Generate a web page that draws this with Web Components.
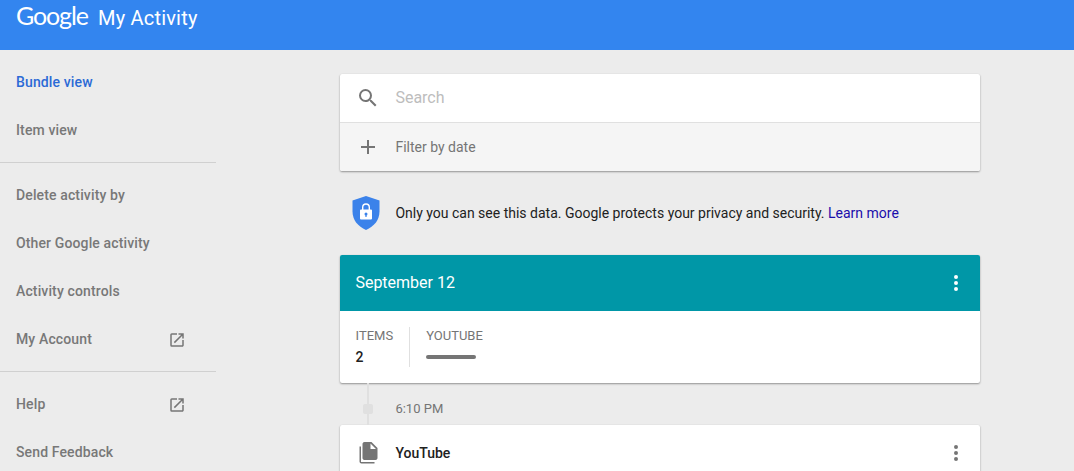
<!DOCTYPE html>
<html><head><meta charset="utf-8"><title>My Activity</title>
<style>
html,body{margin:0;height:471px;overflow:hidden;background:#ececec;font-family:Roboto,"Liberation Sans",sans-serif}
</style></head><body>
<ma-app></ma-app>
<script>
const ICONS={
search:'<path fill="#757575" d="M15.5 14h-.79l-.28-.27A6.47 6.47 0 0 0 16 9.5 6.5 6.5 0 1 0 9.5 16c1.61 0 3.09-.59 4.23-1.57l.27.28v.79l5 4.99L20.49 19l-4.99-5zm-6 0C7.01 14 5 11.99 5 9.5S7.01 5 9.5 5 14 7.01 14 9.5 11.99 14 9.5 14z"/>',
plus:'<path fill="#757575" d="M19 13h-6v6h-2v-6H5v-2h6V5h2v6h6v2z"/>',
open:'<path fill="#757575" d="M19 19H5V5h7V3H5a2 2 0 0 0-2 2v14a2 2 0 0 0 2 2h14c1.100 0 2-.9 2-2v-7h-2v7zM14 3v2h3.590l-9.830 9.830 1.410 1.410L19 6.410V10h2V3h-7z"/>',
more:'<path d="M12 8a2 2 0 1 0 0-4 2 2 0 0 0 0 4zm0 2a2 2 0 1 0 0 4 2 2 0 0 0 0-4zm0 6a2 2 0 1 0 0 4 2 2 0 0 0 0-4z"/>',
doc:'<path fill="#757575" d="M5 5.500H3.500v15c0 1.100.9 2 2 2h13V21H5z"/><path fill="#757575" d="M15.500 1h-7c-1.100 0-2 .9-2 2l-.01 14c0 1.100.89 2 1.990 2H19.500c1.100 0 2-.9 2-2V7zm-1 7V2.500L20 8z"/>'
};
class Base extends HTMLElement{
  render(css,html){this.attachShadow({mode:'open'}).innerHTML=`<style>${css}</style>${html}`}
}
class MaIcon extends HTMLElement{
  constructor(){super();const s=this.getAttribute('size')||24;
  this.attachShadow({mode:'open'}).innerHTML=`<style>:host{display:block;width:${s}px;height:${s}px;flex:none}svg{display:block}</style><svg width="${s}" height="${s}" viewBox="0 0 24 24" fill="currentColor">${ICONS[this.getAttribute('name')]}</svg>`}
}
customElements.define('ma-icon',MaIcon);
class MaHeader extends Base{constructor(){super();this.render(`
:host{display:flex;height:50px;background:#3385ef;color:#fff;align-items:flex-start;flex:none}
.g{font:400 25px/30px Lato,sans-serif;letter-spacing:-1.100px;margin:0 0 0 16px;width:82px;white-space:nowrap}
.t{font:400 20px/24px Roboto,sans-serif;letter-spacing:.2px;margin-top:6px}
`,`<span class="g">Google</span><span class="t">My Activity</span>`)}}
customElements.define('ma-header',MaHeader);
class MaNavItem extends Base{constructor(){super();const ext=this.hasAttribute('ext');this.render(`
:host{display:flex;height:48px;align-items:center;justify-content:space-between;padding:0 30px 0 16px;font:500 14px/20px Roboto,sans-serif;letter-spacing:.13px;color:#787878}
:host([active]){color:#2b6ad6}
ma-icon{margin-top:2px}
`,`<slot></slot>${ext?'<ma-icon name="open" size="18"></ma-icon>':''}`)}}
customElements.define('ma-nav-item',MaNavItem);
class MaNavGroup extends Base{constructor(){super();this.render(`
:host{display:block;padding:8px 0;border-bottom:1px solid #d0d0d0}
:host(:last-child){border-bottom:0}
`,`<slot></slot>`)}}
customElements.define('ma-nav-group',MaNavGroup);
class MaSidebar extends Base{constructor(){super();this.render(`:host{display:block;width:216px;flex:none}`,`<slot></slot>`)}}
customElements.define('ma-sidebar',MaSidebar);
class MaCard extends Base{constructor(){super();this.render(`
:host{display:block;background:#fff;border-radius:2px;box-shadow:0 1px 2px rgba(0,0,0,.38),0 0 1px rgba(0,0,0,.08);overflow:hidden;flex:none}
`,`<slot></slot>`)}}
customElements.define('ma-card',MaCard);
class MaRow extends Base{constructor(){super();this.render(`
:host{display:flex;height:48px;align-items:center;font:400 14px/20px Roboto,sans-serif}
.i{width:56px;display:flex;justify-content:center;flex:none}
.c{flex:1;min-width:0;margin-left:-.6px}
::slotted([slot=end]){margin-right:12px}
`,`<div class="i"><slot name="icon"></slot></div><div class="c"><slot></slot></div><slot name="end"></slot>`)}}
customElements.define('ma-row',MaRow);
class MaSearch extends Base{constructor(){super();this.render(`
:host{display:block;flex:none}
.f{background:#f5f5f5;border-top:1px solid #e0e0e0}
`,`<ma-card>
<ma-row><ma-icon slot="icon" name="search"></ma-icon><span style="font-size:16px;color:#bdbdbd">Search</span></ma-row>
<ma-row class="f"><ma-icon slot="icon" name="plus"></ma-icon><span style="color:#757575">Filter by date</span></ma-row>
</ma-card>`)}}
customElements.define('ma-search',MaSearch);
class MaNotice extends Base{constructor(){super();this.render(`
:host{display:flex;align-items:center;height:84px;flex:none;font:400 14px/20px Roboto,sans-serif;color:#212121}
.i{width:55.400px;flex:none;padding-left:12px;box-sizing:border-box}
svg{display:block}
a{color:#1a0dab;text-decoration:none}
`,`<div class="i"><svg width="28" height="34" viewBox="0 0 28 34"><path fill="#3b82ea" d="M14 0 .5 4.500v11C.5 24 6 30.500 14 34c8-3.500 13.500-10 13.500-18.500v-11z"/><path fill="#fff" d="M19 13.500h-1v-2.200a4 4 0 0 0-8 0v2.200H9a1 1 0 0 0-1 1v8a1 1 0 0 0 1 1h10a1 1 0 0 0 1-1v-8a1 1 0 0 0-1-1zm-7.600-2.200a2.600 2.600 0 0 1 5.200 0v2.200h-5.200z"/><circle cx="14" cy="18" r="1.500" fill="#3b82ea"/><rect x="13.400" y="18" width="1.200" height="3" fill="#3b82ea"/></svg></div>
<span>Only you can see this data. Google protects your privacy and security. <a href="#">Learn more</a></span>`)}}
customElements.define('ma-notice',MaNotice);
class MaDayCard extends Base{constructor(){super();this.render(`
:host{display:block;flex:none}
.h{height:56px;background:#0097a7;color:#fff;display:flex;align-items:center;justify-content:space-between;padding:0 12px 0 15.400px;font:400 16px/24px Roboto,sans-serif}
.b{height:72px;display:flex;padding:16px 0 0 15.600px;box-sizing:border-box;font:400 13px/18px Roboto,sans-serif;color:#757575}
.n{font-size:14px;line-height:24px;color:#212121;font-weight:500}
.st{padding-right:16px;height:40px;border-right:1px solid #e0e0e0;margin-right:16px}
.bar{width:50px;height:4px;border-radius:2px;background:#757575;margin-top:10px}
`,`<ma-card><div class="h"><span>September 12</span><ma-icon name="more"></ma-icon></div>
<div class="b"><div class="st">ITEMS<div class="n">2</div></div><div>YOUTUBE<div class="bar"></div></div></div></ma-card>`)}}
customElements.define('ma-day-card',MaDayCard);
class MaTimeline extends Base{constructor(){super();this.render(`
:host{display:block;height:42px;position:relative;font:400 13px/20px Roboto,sans-serif;color:#757575;padding:16px 0 0 55.400px;box-sizing:border-box;flex:none}
.l{position:absolute;left:27px;top:0;bottom:0;width:2px;background:#e0e0e0}
.d{position:absolute;left:23px;top:21px;width:10px;height:10px;border-radius:2px;background:#e0e0e0}
`,`<div class="l"></div><div class="d"></div><span>6:10 PM</span>`)}}
customElements.define('ma-timeline',MaTimeline);
class MaItem extends Base{constructor(){super();this.render(`:host{display:block;flex:none}
`,`<ma-card><ma-row style="height:56px"><ma-icon slot="icon" name="doc"></ma-icon><span style="font:500 14px/20px Roboto,sans-serif;color:#212121">YouTube</span><ma-icon slot="end" name="more" style="color:#757575"></ma-icon></ma-row></ma-card>`)}}
customElements.define('ma-item',MaItem);
class MaApp extends Base{constructor(){super();this.render(`
:host{display:flex;flex-direction:column;height:471px;overflow:hidden}
.w{display:flex;flex:1;min-height:0}
main{width:640px;margin-left:124px;padding-top:24px;display:flex;flex-direction:column}
`,`<ma-header></ma-header><div class="w">
<ma-sidebar>
<ma-nav-group><ma-nav-item active>Bundle view</ma-nav-item><ma-nav-item>Item view</ma-nav-item></ma-nav-group>
<ma-nav-group><ma-nav-item>Delete activity by</ma-nav-item><ma-nav-item>Other Google activity</ma-nav-item><ma-nav-item>Activity controls</ma-nav-item><ma-nav-item ext>My Account</ma-nav-item></ma-nav-group>
<ma-nav-group><ma-nav-item ext>Help</ma-nav-item><ma-nav-item>Send Feedback</ma-nav-item></ma-nav-group>
</ma-sidebar>
<main><ma-search></ma-search><ma-notice></ma-notice><ma-day-card></ma-day-card><ma-timeline></ma-timeline><ma-item></ma-item></main>
</div>`)}}
customElements.define('ma-app',MaApp);
</script></body></html>
